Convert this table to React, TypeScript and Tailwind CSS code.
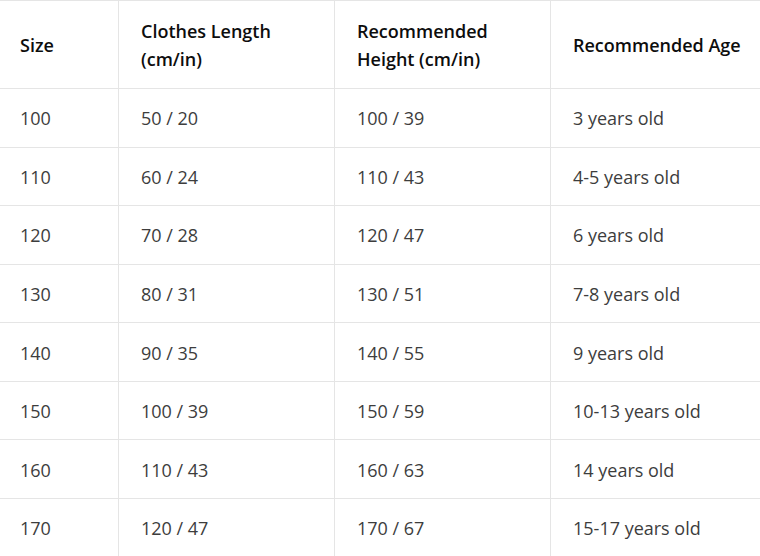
const header = ['Size', 'Clothes Length (cm/in)', 'Recommended Height (cm/in)', 'Recommended Age'];

const rows = [
  ['100', '50 / 20', '100 / 39', '3 years old'],
  ['110', '60 / 24', '110 / 43', '4-5 years old'],
  ['120', '70 / 28', '120 / 47', '6 years old'],
  ['130', '80 / 31', '130 / 51', '7-8 years old'],
  ['140', '90 / 35', '140 / 55', '9 years old'],
  ['150', '100 / 39', '150 / 59', '10-13 years old'],
  ['160', '110 / 43', '160 / 63', '14 years old'],
  ['170', '120 / 47', '170 / 67', '15-17 years old'],
];

const cellPad = ['pl-5 pr-3', 'pl-[22px] pr-5', 'pl-[22px] pr-5', 'pl-[22px] pr-2'];

export default function App() {
  return (
    <div className="w-[760px] h-[556px] overflow-hidden bg-white font-['Open_Sans',sans-serif] text-[18px]">
      <div className="w-[800px] border-t border-[#e5e5e5]">
        <div className="grid grid-cols-[119px_216px_216px_1fr] h-[88px] border-b border-[#e5e5e5]">
          {header.map((h, i) => (
            <div
              key={h}
              className={`flex items-center ${cellPad[i]} ${i < 3 ? 'border-r border-[#e5e5e5]' : ''} font-semibold text-[#0d0d0d] leading-[28px]`}
            >
              <span className={i === 3 ? 'whitespace-nowrap' : ''}>{h}</span>
            </div>
          ))}
        </div>
        {rows.map((r) => (
          <div key={r[0]} className="grid grid-cols-[119px_216px_216px_1fr] h-[58.57px] border-b border-[#e5e5e5]">
            {r.map((c, i) => (
              <div
                key={i}
                className={`flex items-center pt-[2px] ${cellPad[i]} ${i < 3 ? 'border-r border-[#e5e5e5]' : ''} text-[#3d3d3d]`}
              >
                {c}
              </div>
            ))}
          </div>
        ))}
      </div>
    </div>
  );
}
